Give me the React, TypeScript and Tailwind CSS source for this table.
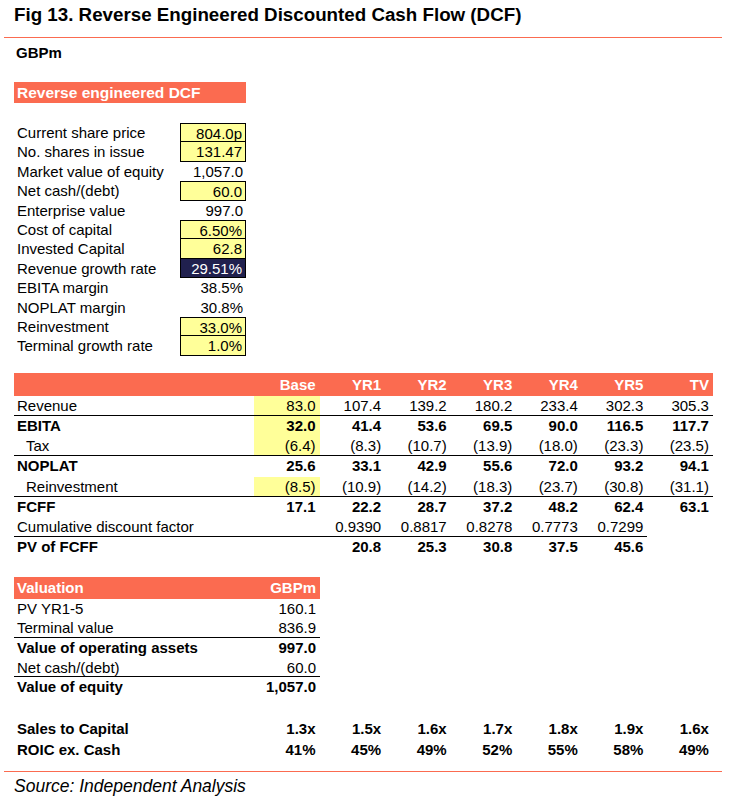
const ORANGE = 'bg-[#fb6b50]';

type Row = { label: string; vals: string[]; bold?: boolean; indent?: boolean; line?: boolean; lineTo?: number; base?: boolean };

const INPUTS: { label: string; value: string; kind: 'box' | 'plain' | 'dark' }[] = [
  { label: 'Current share price', value: '804.0p', kind: 'box' },
  { label: 'No. shares in issue', value: '131.47', kind: 'box' },
  { label: 'Market value of equity', value: '1,057.0', kind: 'plain' },
  { label: 'Net cash/(debt)', value: '60.0', kind: 'box' },
  { label: 'Enterprise value', value: '997.0', kind: 'plain' },
  { label: 'Cost of capital', value: '6.50%', kind: 'box' },
  { label: 'Invested Capital', value: '62.8', kind: 'box' },
  { label: 'Revenue growth rate', value: '29.51%', kind: 'dark' },
  { label: 'EBITA margin', value: '38.5%', kind: 'plain' },
  { label: 'NOPLAT margin', value: '30.8%', kind: 'plain' },
  { label: 'Reinvestment', value: '33.0%', kind: 'box' },
  { label: 'Terminal growth rate', value: '1.0%', kind: 'box' },
];

const COLS = ['Base', 'YR1', 'YR2', 'YR3', 'YR4', 'YR5', 'TV'];

const ROWS: Row[] = [
  { label: 'Revenue', vals: ['83.0', '107.4', '139.2', '180.2', '233.4', '302.3', '305.3'], line: true, base: true },
  { label: 'EBITA', vals: ['32.0', '41.4', '53.6', '69.5', '90.0', '116.5', '117.7'], bold: true, base: true },
  { label: 'Tax', vals: ['(6.4)', '(8.3)', '(10.7)', '(13.9)', '(18.0)', '(23.3)', '(23.5)'], indent: true, line: true, base: true },
  { label: 'NOPLAT', vals: ['25.6', '33.1', '42.9', '55.6', '72.0', '93.2', '94.1'], bold: true },
  { label: 'Reinvestment', vals: ['(8.5)', '(10.9)', '(14.2)', '(18.3)', '(23.7)', '(30.8)', '(31.1)'], indent: true, line: true, base: true },
  { label: 'FCFF', vals: ['17.1', '22.2', '28.7', '37.2', '48.2', '62.4', '63.1'], bold: true },
  { label: 'Cumulative discount factor', vals: ['', '0.9390', '0.8817', '0.8278', '0.7773', '0.7299', ''], line: true, lineTo: 6 },
  { label: 'PV of FCFF', vals: ['', '20.8', '25.3', '30.8', '37.5', '45.6', ''], bold: true },
];

const VALUATION = [
  { label: 'PV YR1-5', value: '160.1' },
  { label: 'Terminal value', value: '836.9', line: true },
  { label: 'Value of operating assets', value: '997.0', bold: true },
  { label: 'Net cash/(debt)', value: '60.0', line: true },
  { label: 'Value of equity', value: '1,057.0', bold: true },
];

const RATIOS = [
  { label: 'Sales to Capital', vals: ['1.3x', '1.5x', '1.6x', '1.7x', '1.8x', '1.9x', '1.6x'] },
  { label: 'ROIC ex. Cash', vals: ['41%', '45%', '49%', '52%', '55%', '58%', '49%'] },
];

export default function App() {
  return (
    <div className="relative h-[805px] w-[735px] overflow-hidden bg-white font-['Liberation_Sans',Arial,sans-serif] text-[15px] text-black">
      <div className="h-[37px] pl-[14px] pt-[3px] text-[18.75px] font-bold leading-[24px]">
        Fig 13. Reverse Engineered Discounted Cash Flow (DCF)
      </div>
      <div className={`ml-[4px] h-px w-[718px] ${ORANGE}`} />

      <div className="mt-[5px] h-[20px] pl-[16px] font-bold leading-[20px]">GBPm</div>

      <div className={`ml-[14px] mt-[19px] h-[21px] w-[232px] pl-[3px] text-[15.5px] font-bold leading-[21px] text-white ${ORANGE}`}>
        Reverse engineered DCF
      </div>

      {/* inputs */}
      <div className="ml-[14px] mt-[20px] w-[232px]">
        {INPUTS.map((r, i) => {
          const prevBoxed = i > 0 && INPUTS[i - 1].kind !== 'plain';
          const cell =
            r.kind === 'plain'
              ? ''
              : `border-x border-b border-black ${prevBoxed ? '' : 'border-t'} ${r.kind === 'dark' ? 'bg-[#20204e] text-white' : 'bg-[#ffff99]'}`;
          return (
            <div key={r.label} className="flex h-[19.4px] leading-[19px]">
              <div className="flex-1 pl-[3px] whitespace-nowrap">{r.label}</div>
              <div className={`w-[66px] pr-[3px] text-right ${cell}`}>{r.value}</div>
            </div>
          );
        })}
      </div>

      {/* projections */}
      <div className="ml-[14px] mt-[17px] w-[699px]">
        <div className={`flex h-[23px] font-bold leading-[23px] text-white ${ORANGE}`}>
          <div className="w-[240px]" />
          {COLS.map((c) => (
            <div key={c} className="w-[65.57px] pr-[4px] text-right">{c}</div>
          ))}
        </div>
        {ROWS.map((r) => (
          <div key={r.label} className={`flex h-[20.25px] leading-[20px] ${r.bold ? 'font-bold' : ''}`}>
            <div className={`w-[240px] whitespace-nowrap ${r.indent ? 'pl-[12px]' : 'pl-[3px]'} ${r.line ? 'border-b border-black' : ''}`}>
              {r.label}
            </div>
            {r.vals.map((v, j) => {
              const lined = r.line && (r.lineTo === undefined || j < r.lineTo);
              return (
                <div
                  key={j}
                  className={`w-[65.57px] pr-[4px] text-right ${lined ? 'border-b border-black' : ''} ${j === 0 && r.base ? 'bg-[#ffff99]' : ''}`}
                >
                  {v}
                </div>
              );
            })}
          </div>
        ))}
      </div>

      {/* valuation */}
      <div className="ml-[14px] mt-[19px] w-[306px]">
        <div className={`flex h-[22px] justify-between px-[3px] pr-[4px] font-bold leading-[22px] text-white ${ORANGE}`}>
          <span>Valuation</span>
          <span>GBPm</span>
        </div>
        {VALUATION.map((r) => (
          <div
            key={r.label}
            className={`flex h-[19.7px] justify-between pl-[3px] pr-[4px] leading-[19px] ${r.bold ? 'font-bold' : ''} ${r.line ? 'border-b border-black' : ''}`}
          >
            <span>{r.label}</span>
            <span>{r.value}</span>
          </div>
        ))}
      </div>

      {/* ratios */}
      <div className="ml-[14px] mt-[21px] w-[699px] font-bold">
        {RATIOS.map((r) => (
          <div key={r.label} className="flex h-[21px] leading-[21px]">
            <div className="w-[240px] pl-[3px]">{r.label}</div>
            {r.vals.map((v, j) => (
              <div key={j} className="w-[65.57px] pr-[4px] text-right">{v}</div>
            ))}
          </div>
        ))}
      </div>

      <div className={`ml-[4px] mt-[11px] h-px w-[718px] ${ORANGE}`} />
      <div className="mt-[3px] pl-[14px] text-[17.5px] italic leading-[22px]">Source: Independent Analysis</div>
    </div>
  );
}
